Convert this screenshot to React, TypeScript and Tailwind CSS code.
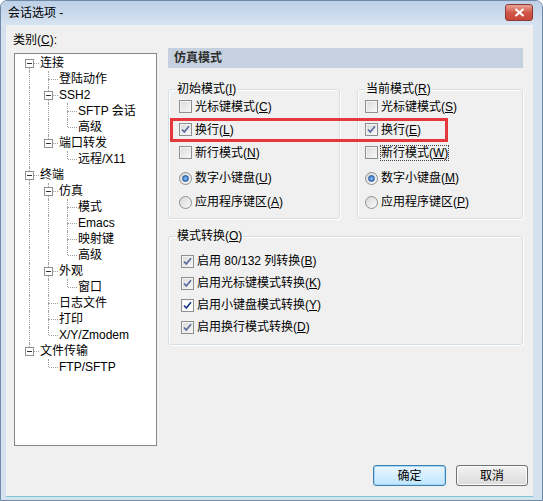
import React from 'react';

type TreeNode = { label: string; level: number; exp?: boolean };

const TREE: TreeNode[] = [
  { label: '连接', level: 0, exp: true },
  { label: '登陆动作', level: 1 },
  { label: 'SSH2', level: 1, exp: true },
  { label: 'SFTP 会话', level: 2 },
  { label: '高级', level: 2 },
  { label: '端口转发', level: 1, exp: true },
  { label: '远程/X11', level: 2 },
  { label: '终端', level: 0, exp: true },
  { label: '仿真', level: 1, exp: true },
  { label: '模式', level: 2 },
  { label: 'Emacs', level: 2 },
  { label: '映射键', level: 2 },
  { label: '高级', level: 2 },
  { label: '外观', level: 1, exp: true },
  { label: '窗口', level: 2 },
  { label: '日志文件', level: 1 },
  { label: '打印', level: 1 },
  { label: 'X/Y/Zmodem', level: 1 },
  { label: '文件传输', level: 0, exp: true },
  { label: 'FTP/SFTP', level: 1 },
];

// is there a later sibling at `level` before the branch closes
const continues = (i: number, level: number) => {
  for (let j = i + 1; j < TREE.length; j++) {
    if (TREE[j].level < level) return false;
    if (TREE[j].level === level) return true;
  }
  return false;
};

const lineX = (level: number) => 14 + level * 19;

function TreeRow({ node, index }: { node: TreeNode; index: number }) {
  const x = lineX(node.level);
  const guides: number[] = [];
  for (let a = 0; a < node.level; a++) {
    if (continues(index, a)) guides.push(a);
  }
  const hasNext = continues(index, node.level);
  return (
    <div className="relative h-[16px]">
      {guides.map((a) => (
        <div
          key={a}
          className="absolute top-0 h-[16px] border-l border-dotted border-[#a0a0a0]"
          style={{ left: lineX(a) }}
        />
      ))}
      {index > 0 && (
        <div className="absolute top-0 h-[8px] border-l border-dotted border-[#a0a0a0]" style={{ left: x }} />
      )}
      {hasNext && (
        <div className="absolute top-[8px] h-[8px] border-l border-dotted border-[#a0a0a0]" style={{ left: x }} />
      )}
      <div
        className="absolute top-[8px] border-t border-dotted border-[#a0a0a0]"
        style={{ left: x + 1, width: 9 }}
      />
      {node.exp && (
        <div
          className="absolute top-[4px] w-[9px] h-[9px] border border-[#919191] bg-white flex items-center justify-center"
          style={{ left: x - 4 }}
        >
          <div className="w-[5px] h-px bg-[#333]" />
        </div>
      )}
      <span
        className="absolute top-0 leading-[16px] text-[12px] text-black whitespace-nowrap"
        style={{ left: x + 11 }}
      >
        {node.label}
      </span>
    </div>
  );
}

function Key({ text, k }: { text: string; k: string }) {
  return (
    <span className="whitespace-nowrap">
      {text}(<span className="underline underline-offset-1">{k}</span>)
    </span>
  );
}

function CheckBox({ checked, strong }: { checked?: boolean; strong?: boolean }) {
  return (
    <span
      className={`w-[13px] h-[13px] border border-[#8f8f8f] flex items-center justify-center shrink-0 shadow-[inset_1px_1px_0_#f4f4f4] ${
        strong ? 'bg-white' : 'bg-linear-to-br from-[#dadada] to-[#f8f8f8]'
      }`}
    >
      {checked && (
        <svg width="11" height="11" viewBox="0 0 11 11">
          <path
            d="M2 5.5 L4.3 8 L9 2.2"
            fill="none"
            stroke={strong ? '#1f3c8c' : '#5b6b9e'}
            strokeWidth="1.7"
          />
        </svg>
      )}
    </span>
  );
}

function Radio({ checked }: { checked?: boolean }) {
  return (
    <span className="w-[13px] h-[13px] rounded-full border border-[#8f8f8f] bg-linear-to-br from-[#d8d8d8] to-[#fafafa] flex items-center justify-center shrink-0">
      {checked && (
        <span className="w-[7px] h-[7px] rounded-full bg-radial from-[#8cc4f4] to-[#1f5fb8] border border-[#2a5a9e]" />
      )}
    </span>
  );
}

function CheckRow({ children, checked, strong, h = 'h-[23px]' }: { children: React.ReactNode; checked?: boolean; strong?: boolean; h?: string }) {
  return (
    <div className={`flex items-center gap-[3px] ${h}`}>
      <CheckBox checked={checked} strong={strong} />
      <span>{children}</span>
    </div>
  );
}

function RadioRow({ children, checked }: { children: React.ReactNode; checked?: boolean }) {
  return (
    <div className="flex items-center gap-[3px] h-[24px]">
      <Radio checked={checked} />
      <span>{children}</span>
    </div>
  );
}

function Group({ title, k, className, children }: { title: string; k: string; className: string; children: React.ReactNode }) {
  return (
    <fieldset
      className={`border border-[#d5dfe5] rounded-[3px] p-0 m-0 min-w-0 shadow-[inset_1px_1px_0_#fff,1px_1px_0_#fff] ${className}`}
    >
      <legend className="ml-[7px] px-[1px] leading-[14px] text-[12px]">
        <Key text={title} k={k} />
      </legend>
      {children}
    </fieldset>
  );
}

export default function App() {
  return (
    <div className="relative w-[543px] h-[501px] bg-[#d4e2f0] border border-[#6f8aa6] rounded-t-[7px] flex flex-col font-['Liberation_Sans','Noto_Sans_CJK_SC',sans-serif] text-[12px] text-black overflow-hidden">
      {/* title bar */}
      <div className="h-[24px] shrink-0 flex items-center justify-between bg-linear-to-b from-[#bdd0e7] to-[#d6e3f1]">
        <span className="pl-[7px] text-[12px] text-black">会话选项 -</span>
        <div className="mr-[9px] mt-[-2px] w-[28px] h-[17px] rounded-[3px] border border-[#8a3a32] bg-linear-to-b from-[#e8a494] via-[#d0574a] to-[#c8463a] flex items-center justify-center">
          <svg width="11" height="9" viewBox="0 0 11 9">
            <path d="M1.5 1 L9.5 8 M9.5 1 L1.5 8" stroke="#fff" strokeWidth="2.2" />
          </svg>
        </div>
      </div>

      {/* body */}
      <div className="ml-[5px] mr-[9px] h-[472px] bg-[#f0f0f0] flex flex-col border-b border-[#7ec6d6]">
        <div className="flex pt-[8px]">
          {/* category tree */}
          <div className="ml-[8px] w-[143px] shrink-0">
            <div className="-ml-[1px] leading-[14px] mb-[6px]">
              类别(<span className="underline underline-offset-1">C</span>):
            </div>
            <div className="h-[393px] border border-[#828790] bg-white pt-[1px]">
              {TREE.map((n, i) => (
                <TreeRow key={i} node={n} index={i} />
              ))}
            </div>
          </div>

          {/* settings panel */}
          <div className="ml-[11px] w-[355px] mt-[15px]">
            <div className="h-[20px] bg-[#c5d1de] pl-[6px] flex items-center font-bold text-[#2f2f2f] text-[12px]">
              仿真模式
            </div>

            <div className="flex justify-between mt-[14px]">
              <Group title="初始模式" k="I" className="w-[172px]">
                <div className="pl-[10px] pt-[-1px] pb-[4px] -mt-[1px]">
                  <CheckRow><Key text="光标键模式" k="C" /></CheckRow>
                  <CheckRow checked><Key text="换行" k="L" /></CheckRow>
                  <CheckRow><Key text="新行模式" k="N" /></CheckRow>
                  <div className="h-[2px]" />
                  <RadioRow checked><Key text="数字小键盘" k="U" /></RadioRow>
                  <RadioRow><Key text="应用程序键区" k="A" /></RadioRow>
                </div>
              </Group>
              <Group title="当前模式" k="R" className="w-[166px]">
                <div className="pl-[7px] pb-[4px] -mt-[1px]">
                  <CheckRow><Key text="光标键模式" k="S" /></CheckRow>
                  <CheckRow checked><Key text="换行" k="E" /></CheckRow>
                  <CheckRow>
                    <span className="outline outline-1 outline-dotted outline-[#444]">
                      <Key text="新行模式" k="W" />
                    </span>
                  </CheckRow>
                  <div className="h-[2px]" />
                  <RadioRow checked><Key text="数字小键盘" k="M" /></RadioRow>
                  <RadioRow><Key text="应用程序键区" k="P" /></RadioRow>
                </div>
              </Group>
            </div>

            <Group title="模式转换" k="O" className="w-[355px] mt-[10px]">
              <div className="pl-[12px] pt-[7px] pb-[6px]">
                <CheckRow checked h="h-[22px]"><Key text="启用 80/132 列转换" k="B" /></CheckRow>
                <CheckRow checked h="h-[22px]"><Key text="启用光标键模式转换" k="K" /></CheckRow>
                <CheckRow checked strong h="h-[22px]"><Key text="启用小键盘模式转换" k="Y" /></CheckRow>
                <CheckRow checked h="h-[22px]"><Key text="启用换行模式转换" k="D" /></CheckRow>
              </div>
            </Group>
          </div>
        </div>

        {/* buttons */}
        <div className="flex justify-end gap-[10px] mt-[19px] mr-[5px]">
          <button className="w-[73px] h-[21px] rounded-[3px] border border-[#3c7fb1] bg-linear-to-b from-[#eaf6fd] to-[#bee6fd] shadow-[inset_0_0_0_1px_#a6d8f7] text-[12px]">
            确定
          </button>
          <button className="w-[72px] h-[21px] rounded-[3px] border border-[#707070] bg-linear-to-b from-[#f2f2f2] to-[#dcdcdc] shadow-[inset_0_0_0_1px_#fcfcfc] text-[12px]">
            取消
          </button>
        </div>
      </div>

      {/* red annotation box */}
      <div className="absolute left-[169px] top-[117px] w-[278px] h-[24px] border-[3px] border-[#e6373c] pointer-events-none" />
    </div>
  );
}
